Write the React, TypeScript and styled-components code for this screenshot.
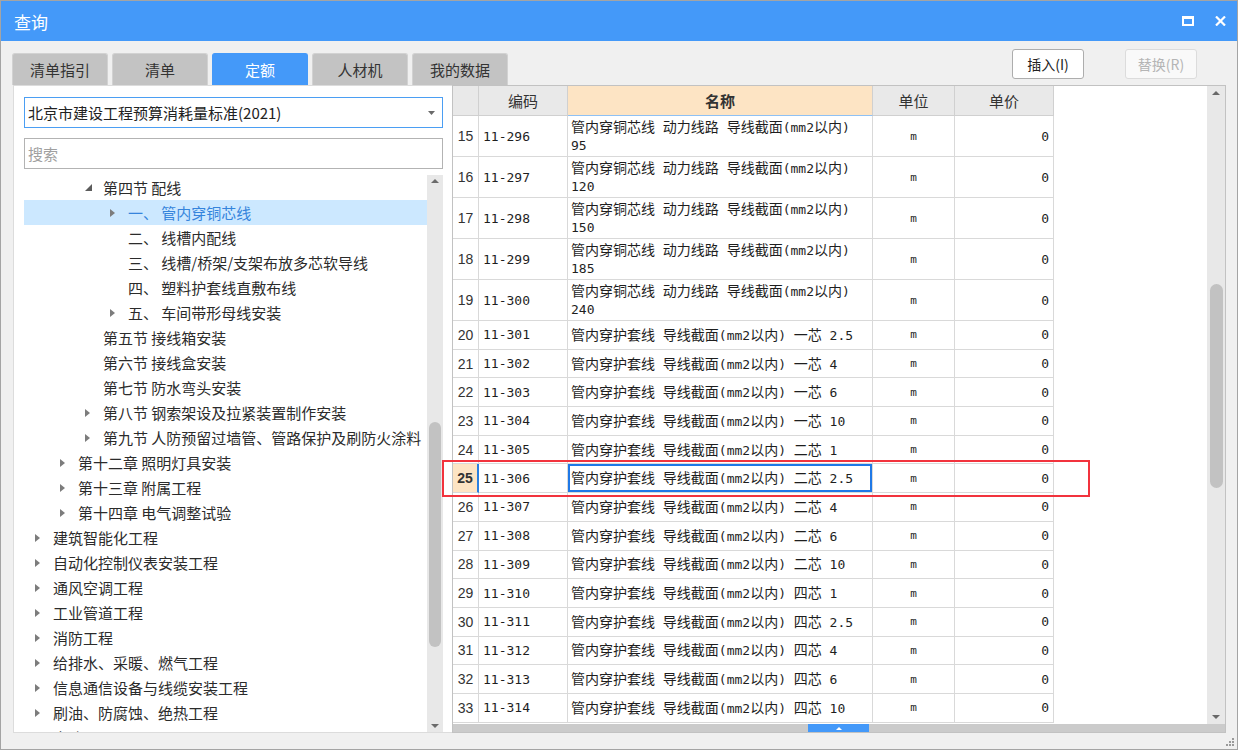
import React from "react";
import styled, { createGlobalStyle } from "styled-components";

const GlobalStyle = createGlobalStyle`
  html, body {
    margin: 0;
    padding: 0;
    background: #ffffff;
  }
  body {
    font-family: "Noto Sans CJK SC", "Noto Sans", sans-serif;
  }
  * {
    box-sizing: border-box;
  }
`;

const CJK = `"Noto Sans CJK SC", "Noto Sans", sans-serif`;
const MONO = `"DejaVu Sans Mono", "Liberation Mono", monospace`;

// ---- window frame ----
const Window = styled.div`
  position: relative;
  width: 1238px;
  height: 750px;
  border: 1px solid #a4a4a4;
  background: #f0f0f0;
  display: flex;
  flex-direction: column;
  overflow: hidden;
`;

const TitleBar = styled.div`
  height: 40px;
  flex: none;
  background: #4499f9;
  color: #ffffff;
  display: flex;
  align-items: center;
  padding: 2px 11px 0 13px;
  font-family: ${CJK};
  font-size: 17px;
`;

const TitleText = styled.span`
  line-height: 20px;
`;

const TitleButtons = styled.div`
  margin-left: auto;
  display: flex;
  align-items: center;
  gap: 21px;
  margin-top: -3px;
`;

const Body = styled.div`
  flex: 1;
  display: flex;
  flex-direction: column;
  padding: 0 11px 16px 12px;
  min-height: 0;
`;

// ---- tabs + buttons ----
const Toolbar = styled.div`
  height: 44px;
  flex: none;
  display: flex;
  align-items: flex-end;
`;

const Tabs = styled.div`
  display: flex;
  gap: 4px;
  margin-left: -1px;
`;

const Tab = styled.div<{ $active?: boolean }>`
  width: 96px;
  height: 32px;
  display: flex;
  align-items: center;
  justify-content: center;
  border: 1px solid ${(p) => (p.$active ? "#4499f9" : "#d2d2d2")};
  border-bottom: none;
  border-radius: 3px 3px 0 0;
  background: ${(p) => (p.$active ? "#4499f9" : "#c3c3c3")};
  color: ${(p) => (p.$active ? "#ffffff" : "#333333")};
  font-family: ${CJK};
  font-size: 15px;
`;

const Actions = styled.div`
  margin-left: auto;
  margin-right: 29px;
  align-self: flex-start;
  margin-top: 8px;
  display: flex;
  gap: 41px;
`;

const Button = styled.div<{ $disabled?: boolean }>`
  width: 72px;
  height: 30px;
  display: flex;
  align-items: center;
  justify-content: center;
  border: 1px solid ${(p) => (p.$disabled ? "#dcdcdc" : "#adadad")};
  border-radius: 3px;
  background: ${(p) => (p.$disabled ? "#f9f9f9" : "#ffffff")};
  color: ${(p) => (p.$disabled ? "#b5b5b5" : "#222222")};
  font-family: ${CJK};
  font-size: 14px;
`;

// ---- content split ----
const Content = styled.div`
  height: 648px;
  display: flex;
`;

const LeftPanel = styled.div`
  width: 439px;
  flex: none;
  background: #ffffff;
  border: 1px solid #dcdcdc;
  border-right: none;
  display: flex;
  flex-direction: column;
  padding: 11px 9px 0 10px;
`;

const Combo = styled.div`
  height: 31px;
  flex: none;
  border: 1px solid #4b9ef3;
  display: flex;
  align-items: center;
  padding: 0 7px 0 3px;
  font-family: ${CJK};
  font-size: 15px;
  color: #222222;
  margin-bottom: 10px;
`;

const ComboArrow = styled.span`
  margin-left: auto;
  display: flex;
`;

const Search = styled.div`
  height: 31px;
  flex: none;
  border: 1px solid #b3b3b3;
  display: flex;
  align-items: center;
  padding: 0 3px;
  font-family: ${CJK};
  font-size: 15px;
  color: #a0a0a0;
  margin-bottom: 6px;
`;

const Tree = styled.div`
  flex: 1;
  display: flex;
  min-height: 0;
`;

const TreeList = styled.div`
  flex: 1;
  overflow: hidden;
`;

const TreeRow = styled.div<{ $level: number; $selected?: boolean }>`
  height: 25px;
  display: flex;
  align-items: center;
  padding-left: ${(p) => p.$level * 25 + 6}px;
  background: ${(p) => (p.$selected ? "#cce8ff" : "transparent")};
  color: ${(p) => (p.$selected ? "#3584dc" : "#2b2b2b")};
  font-family: ${CJK};
  font-size: 15px;
  white-space: nowrap;
`;

const Toggle = styled.span`
  width: 23px;
  flex: none;
  display: flex;
  align-items: center;
  padding-left: 5px;
`;

const ScrollTrack = styled.div<{ $width: number }>`
  width: ${(p) => p.$width}px;
  flex: none;
  background: #e8e8e8;
  display: flex;
  flex-direction: column;
  align-items: center;
`;

const ScrollArrow = styled.div<{ $h: number }>`
  height: ${(p) => p.$h}px;
  flex: none;
  display: flex;
  align-items: center;
  justify-content: center;
`;

const ScrollThumb = styled.div<{ $top: number; $height: number; $width: number }>`
  margin-top: ${(p) => p.$top}px;
  height: ${(p) => p.$height}px;
  width: ${(p) => p.$width}px;
  flex: none;
  border-radius: 7px;
  background: #c2c2c2;
`;

const Spacer = styled.div`
  flex: 1;
`;

// ---- table ----
const TablePanel = styled.div`
  flex: 1;
  min-width: 0;
  background: #ffffff;
  border: 1px solid #c2c2c2;
  display: flex;
  flex-direction: column;
`;

const TableMain = styled.div`
  flex: 1;
  display: flex;
  min-height: 0;
`;

const GridArea = styled.div`
  flex: 1;
  overflow: hidden;
`;

const COLS = "26px 89px 305px 82px 99px";

const HeaderRow = styled.div`
  display: grid;
  grid-template-columns: ${COLS};
  height: 30px;
`;

const HeadCell = styled.div<{ $active?: boolean }>`
  display: flex;
  align-items: center;
  justify-content: center;
  background: ${(p) => (p.$active ? "#fde4c4" : "#e9e9e9")};
  border-right: 1px solid #d0d0d0;
  border-bottom: 1px solid ${(p) => (p.$active ? "#8fc1f4" : "#d0d0d0")};
  font-family: ${CJK};
  font-size: 15px;
  font-weight: ${(p) => (p.$active ? 700 : 400)};
  color: #333333;
`;

const Row = styled.div<{ $tall?: boolean }>`
  display: grid;
  grid-template-columns: ${COLS};
  height: ${(p) => (p.$tall ? "41px" : "28.7px")};
`;

const Cell = styled.div<{ $align?: "left" | "center" | "right" }>`
  display: flex;
  align-items: center;
  justify-content: ${(p) =>
    p.$align === "right" ? "flex-end" : p.$align === "center" ? "center" : "flex-start"};
  padding: 0 4px;
  border-right: 1px solid #d9d9d9;
  border-bottom: 1px solid #d9d9d9;
  font-family: ${MONO};
  font-size: 13px;
  color: #1e1e1e;
  white-space: nowrap;
  overflow: hidden;
`;

const NumCell = styled(Cell)<{ $current?: boolean }>`
  padding: 0;
  background: ${(p) => (p.$current ? "#fde4c4" : "#ffffff")};
  font-family: "Liberation Sans", ${CJK};
  font-size: 14px;
  font-weight: ${(p) => (p.$current ? 700 : 400)};
  color: #333333;
  border-right: ${(p) => (p.$current ? "2px solid #2a7fe0" : "1px solid #d9d9d9")};
`;

const NameCell = styled(Cell)<{ $focus?: boolean }>`
  padding-left: 3px;
  font-family: ${CJK};
  font-size: 14px;
  box-shadow: ${(p) => (p.$focus ? "inset 0 0 0 2px #1f78e6" : "none")};
`;

const NameText = styled.span`
  display: block;
  white-space: pre;
  line-height: 17px;
`;

const Latin = styled.span`
  font-family: ${MONO};
  font-size: 13px;
`;

const UnitCell = styled(Cell)`
  font-size: 11px;
`;

const HScroll = styled.div`
  height: 8px;
  flex: none;
  background: #cbcbcb;
  display: flex;
`;

const HThumb = styled.div<{ $left: number; $width: number }>`
  margin-left: ${(p) => p.$left}px;
  width: ${(p) => p.$width}px;
  background: #4499f9;
  display: flex;
  align-items: center;
  justify-content: center;
`;

// ---- overlays ----
const Highlight = styled.div`
  position: absolute;
  left: 441px;
  top: 459px;
  width: 648px;
  height: 37px;
  border: 2px solid #f2333d;
  pointer-events: none;
`;

const Grip = styled.div`
  position: absolute;
  right: 3px;
  bottom: 3px;
  display: flex;
`;

// ---- icons ----
const TriUp = ({ color = "#666", w = 8, h = 4 }: { color?: string; w?: number; h?: number }) => (
  <svg width={w} height={h} viewBox={`0 0 ${w} ${h}`}>
    <polygon points={`0,${h} ${w / 2},0 ${w},${h}`} fill={color} />
  </svg>
);

const TriDown = ({ color = "#666", w = 8, h = 4 }: { color?: string; w?: number; h?: number }) => (
  <svg width={w} height={h} viewBox={`0 0 ${w} ${h}`}>
    <polygon points={`0,0 ${w},0 ${w / 2},${h}`} fill={color} />
  </svg>
);

const Closed = () => (
  <svg width="5" height="8" viewBox="0 0 5 8">
    <polygon points="0,0 5,4 0,8" fill="#7c7c7c" />
  </svg>
);

const Opened = () => (
  <svg width="7" height="7" viewBox="0 0 7 7">
    <polygon points="7,0 7,7 0,7" fill="#5c5c5c" />
  </svg>
);

// split a cell text into CJK and ASCII runs so digits/latin get the narrow font
const runs = (s: string) =>
  s.split(/([\x20-\x7e]+)/).map((part, i) =>
    /^[\x20-\x7e]+$/.test(part) ? <Latin key={i}>{part}</Latin> : part
  );

// ---- data ----
type TreeItem = { level: number; text: string; toggle?: "open" | "closed"; selected?: boolean };

const treeItems: TreeItem[] = [
  { level: 2, text: "第四节 配线", toggle: "open" },
  { level: 3, text: "一、 管内穿铜芯线", toggle: "closed", selected: true },
  { level: 3, text: "二、 线槽内配线" },
  { level: 3, text: "三、 线槽/桥架/支架布放多芯软导线" },
  { level: 3, text: "四、 塑料护套线直敷布线" },
  { level: 3, text: "五、 车间带形母线安装", toggle: "closed" },
  { level: 2, text: "第五节 接线箱安装" },
  { level: 2, text: "第六节 接线盒安装" },
  { level: 2, text: "第七节 防水弯头安装" },
  { level: 2, text: "第八节 钢索架设及拉紧装置制作安装", toggle: "closed" },
  { level: 2, text: "第九节 人防预留过墙管、管路保护及刷防火涂料", toggle: "closed" },
  { level: 1, text: "第十二章 照明灯具安装", toggle: "closed" },
  { level: 1, text: "第十三章 附属工程", toggle: "closed" },
  { level: 1, text: "第十四章 电气调整试验", toggle: "closed" },
  { level: 0, text: "建筑智能化工程", toggle: "closed" },
  { level: 0, text: "自动化控制仪表安装工程", toggle: "closed" },
  { level: 0, text: "通风空调工程", toggle: "closed" },
  { level: 0, text: "工业管道工程", toggle: "closed" },
  { level: 0, text: "消防工程", toggle: "closed" },
  { level: 0, text: "给排水、采暖、燃气工程", toggle: "closed" },
  { level: 0, text: "信息通信设备与线缆安装工程", toggle: "closed" },
  { level: 0, text: "刷油、防腐蚀、绝热工程", toggle: "closed" },
  { level: 0, text: "人防通用项目", toggle: "closed" },
];

type Item = { no: number; code: string; name: string; tall?: boolean };

const copperSizes = ["95", "120", "150", "185", "240"];
const sheathed: [string, string][] = [
  ["一芯", "2.5"], ["一芯", "4"], ["一芯", "6"], ["一芯", "10"],
  ["二芯", "1"], ["二芯", "2.5"], ["二芯", "4"], ["二芯", "6"], ["二芯", "10"],
  ["四芯", "1"], ["四芯", "2.5"], ["四芯", "4"], ["四芯", "6"], ["四芯", "10"],
];

const items: Item[] = [
  ...copperSizes.map((s, i) => ({
    no: 15 + i,
    code: `11-${296 + i}`,
    name: `管内穿铜芯线 动力线路 导线截面(mm2以内)\n${s}`,
    tall: true,
  })),
  ...sheathed.map(([core, size], i) => ({
    no: 20 + i,
    code: `11-${301 + i}`,
    name: `管内穿护套线 导线截面(mm2以内) ${core} ${size}`,
  })),
];

const CURRENT = 25;

export default function App() {
  return (
    <>
      <GlobalStyle />
      <Window>
        <TitleBar>
          <TitleText>查询</TitleText>
          <TitleButtons>
            <svg width="12" height="10" viewBox="0 0 12 10">
              <rect x="1" y="1.5" width="10" height="7.5" fill="none" stroke="#fff" strokeWidth="2" />
              <rect x="0" y="0" width="12" height="3" fill="#fff" />
            </svg>
            <svg width="11" height="10" viewBox="0 0 11 10">
              <path d="M1 0.5 L10 9.5 M10 0.5 L1 9.5" stroke="#fff" strokeWidth="2.2" />
            </svg>
          </TitleButtons>
        </TitleBar>

        <Body>
          <Toolbar>
            <Tabs>
              <Tab>清单指引</Tab>
              <Tab>清单</Tab>
              <Tab $active>定额</Tab>
              <Tab>人材机</Tab>
              <Tab>我的数据</Tab>
            </Tabs>
            <Actions>
              <Button>插入(I)</Button>
              <Button $disabled>替换(R)</Button>
            </Actions>
          </Toolbar>

          <Content>
            <LeftPanel>
              <Combo>
                北京市建设工程预算消耗量标准(2021)
                <ComboArrow>
                  <TriDown color="#6a6a6a" w={7} h={4} />
                </ComboArrow>
              </Combo>
              <Search>搜索</Search>
              <Tree>
                <TreeList>
                  {treeItems.map((t, i) => (
                    <TreeRow key={i} $level={t.level} $selected={t.selected}>
                      <Toggle>
                        {t.toggle === "open" && <Opened />}
                        {t.toggle === "closed" && <Closed />}
                      </Toggle>
                      {t.text}
                    </TreeRow>
                  ))}
                </TreeList>
                <ScrollTrack $width={16}>
                  <ScrollArrow $h={12}>
                    <TriUp color="#6b6b6b" />
                  </ScrollArrow>
                  <ScrollThumb $top={235} $height={225} $width={12} />
                  <Spacer />
                  <ScrollArrow $h={13}>
                    <TriDown color="#6b6b6b" />
                  </ScrollArrow>
                </ScrollTrack>
              </Tree>
            </LeftPanel>

            <TablePanel>
              <TableMain>
                <GridArea>
                  <HeaderRow>
                    <HeadCell />
                    <HeadCell>编码</HeadCell>
                    <HeadCell $active>名称</HeadCell>
                    <HeadCell>单位</HeadCell>
                    <HeadCell>单价</HeadCell>
                  </HeaderRow>
                  {items.map((it) => {
                    const cur = it.no === CURRENT;
                    return (
                      <Row key={it.no} $tall={it.tall}>
                        <NumCell $align="center" $current={cur}>
                          {it.no}
                        </NumCell>
                        <Cell>{it.code}</Cell>
                        <NameCell $focus={cur}>
                          <NameText>{runs(it.name)}</NameText>
                        </NameCell>
                        <UnitCell $align="center">m</UnitCell>
                        <Cell $align="right">0</Cell>
                      </Row>
                    );
                  })}
                </GridArea>
                <ScrollTrack $width={18}>
                  <ScrollArrow $h={14}>
                    <TriUp color="#686868" />
                  </ScrollArrow>
                  <ScrollThumb $top={184} $height={204} $width={13} />
                  <Spacer />
                  <ScrollArrow $h={14}>
                    <TriDown color="#686868" />
                  </ScrollArrow>
                </ScrollTrack>
              </TableMain>
              <HScroll>
                <HThumb $left={355} $width={61}>
                  <TriUp color="#ffffff" w={6} h={3} />
                </HThumb>
              </HScroll>
            </TablePanel>
          </Content>
        </Body>

        <Highlight />
        <Grip>
          <svg width="8" height="8" viewBox="0 0 8 8">
            {[
              [6, 0], [6, 3], [3, 3], [6, 6], [3, 6], [0, 6],
            ].map(([x, y], i) => (
              <rect key={i} x={x} y={y} width="2" height="2" fill="#9a9a9a" />
            ))}
          </svg>
        </Grip>
      </Window>
    </>
  );
}
